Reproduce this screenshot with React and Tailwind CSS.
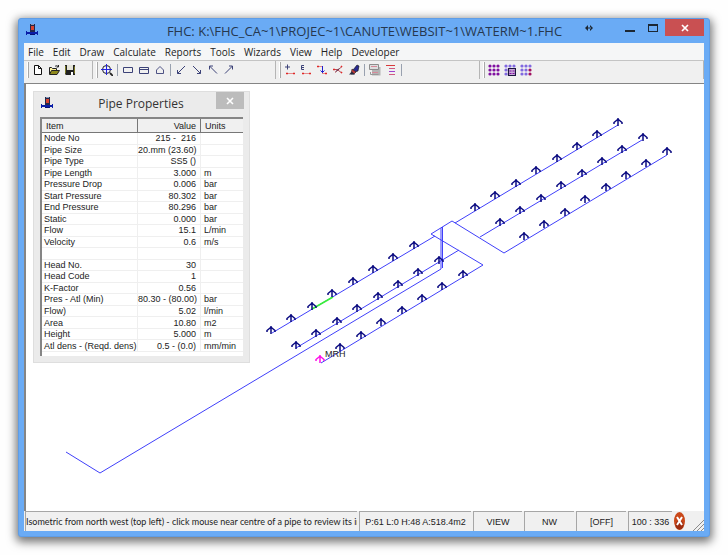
import React from 'react';
import clsx from 'clsx';

const menus = ['File', 'Edit', 'Draw', 'Calculate', 'Reports', 'Tools', 'Wizards', 'View', 'Help', 'Developer'];

const rows = [
  ['Node No', '215 -  216', ''],
  ['Pipe Size', '20.mm (23.60)', ''],
  ['Pipe Type', 'SS5 ()', ''],
  ['Pipe Length', '3.000', 'm'],
  ['Pressure Drop', '0.006', 'bar'],
  ['Start Pressure', '80.302', 'bar'],
  ['End Pressure', '80.296', 'bar'],
  ['Static', '0.000', 'bar'],
  ['Flow', '15.1', 'L/min'],
  ['Velocity', '0.6', 'm/s'],
  ['\u00a0', '', ''],
  ['Head No.', '30', ''],
  ['Head Code', '1', ''],
  ['K-Factor', '0.56', ''],
  ['Pres - Atl (Min)', '80.30 - (80.00)', 'bar'],
  ['Flow)', '5.02', 'l/min'],
  ['Area', '10.80', 'm2'],
  ['Height', '5.000', 'm'],
  ['Atl dens - (Reqd. dens)', '0.5 - (0.0)', 'mm/min'],
];

// Each range pipe: line ends, then the tip of its first (lowest) sprinkler head
const ranges = [
  { from: [272, 333], to: [435, 236], head: [271, 326] },
  { from: [296, 348], to: [459, 250], head: [296, 341] },
  { from: [321, 363], to: [483, 265], head: [320, 355], remote: true },
  { from: [455, 223], to: [618, 125], head: [475, 203] },
  { from: [480, 237], to: [642, 140], head: [500, 218] },
  { from: [504, 253], to: [667, 155], head: [524, 232] },
];

const AppIcon = () => (
  <svg viewBox="0 0 14 14" className="w-[14px] h-[14px] shrink-0" aria-hidden="true">
    <path d="M5 1h5v8H5z" fill="#23284c" />
    <path d="M6 1h3v1H6z" fill="#8a98b8" />
    <path d="M6 3h3v4H6z" fill="#d8432f" />
    <path d="M1 8h1v1h10V8h1v4h-1v-1H2v1H1z" fill="#0a1ea8" />
    <path d="M2 9h10v2H2z" fill="#0a1ea8" />
    <path d="M5 11h5v1H5z" fill="#061070" />
  </svg>
);

const DotGrid = ({ colors, children }) => (
  <svg viewBox="0 0 12 12" className="w-3 h-3">
    {[2, 6, 10].map((x, i) =>
      [2, 6, 10].map((y, j) => (
        <circle key={`${x}-${y}`} cx={x} cy={y} r="1.600" fill={colors(i, j)} />
      ))
    )}
    {children}
  </svg>
);

const icons = {
  New: (
    <svg viewBox="0 0 12 12" className="w-3 h-3">
      <path d="M2.500 1.500h4l3 3v6h-7zM6.500 1.500v3h3" fill="#fff" stroke="#111" />
    </svg>
  ),
  Open: (
    <svg viewBox="0 0 12 12" className="w-3 h-3">
      <path d="M1.500 10V3.500h2l1 1h4V6" fill="#fff3a0" stroke="#222" />
      <path d="M1.500 10.500l2-4h8l-2.500 4z" fill="#8f8a1c" stroke="#222" />
      <path d="M7 2.500c1-1 2-1 3 0M10.500 1v2h-2" fill="none" stroke="#222" />
    </svg>
  ),
  Save: (
    <svg viewBox="0 0 12 12" className="w-3 h-3">
      <path d="M1 1h10v10H2l-1-1z" fill="#222" />
      <path d="M3 1h6v5H3z" fill="#e4e4d8" />
      <path d="M1.500 2v7.500M10.500 2.500v7" stroke="#7c7a25" />
      <path d="M7 8h2v3H7z" fill="#fff" />
    </svg>
  ),
  'Zoom extents': (
    <svg viewBox="0 0 12 12" className="w-3 h-3">
      <circle cx="5.500" cy="5.500" r="4" fill="#eef" stroke="#222" />
      <path d="M5.500 0v11M0 5.500h11" stroke="#2222dd" />
      <path d="M9 9l3 3" stroke="#222" strokeWidth="1.800" />
    </svg>
  ),
  Plan: (
    <svg viewBox="0 0 12 12" className="w-3 h-3">
      <path d="M1.500 3.500h9v5h-9z" fill="none" stroke="#3c4278" />
    </svg>
  ),
  Elevation: (
    <svg viewBox="0 0 12 12" className="w-3 h-3">
      <path d="M1.500 3.500h9v6h-9zM1.500 5.500h9" fill="none" stroke="#3c4278" />
    </svg>
  ),
  'End view': (
    <svg viewBox="0 0 12 12" className="w-3 h-3">
      <path d="M2.500 9.500v-3.500l3.500-3.500 3.500 3.500v3.500z" fill="none" stroke="#3c4278" strokeWidth="0.900" />
    </svg>
  ),
  'South west': (
    <svg viewBox="0 0 12 12" className="w-3 h-3">
      <path d="M10 2L2.500 9.500M2.500 6v3.500H6" fill="none" stroke="#3c4278" />
    </svg>
  ),
  'South east': (
    <svg viewBox="0 0 12 12" className="w-3 h-3">
      <path d="M2 2l7.500 7.500M9.500 6v3.500H6" fill="none" stroke="#3c4278" />
    </svg>
  ),
  'North west': (
    <svg viewBox="0 0 12 12" className="w-3 h-3">
      <path d="M10 9.500L2.500 2M2.500 5.500V2H6" fill="none" stroke="#3c4278" />
    </svg>
  ),
  'North east': (
    <svg viewBox="0 0 12 12" className="w-3 h-3">
      <path d="M2 9.500L9.500 2M9.500 5.500V2H6" fill="none" stroke="#3c4278" />
    </svg>
  ),
  'Add pipe': (
    <svg viewBox="0 0 12 12" className="w-3 h-3">
      <path d="M1 3h5M3.500 0.500v5" stroke="#3c4278" />
      <path d="M2 9.500h9" stroke="#e58a8a" />
      <path d="M2 9.500h2M9 9.500h2" stroke="#e02828" strokeWidth="1.600" />
    </svg>
  ),
  'Edit pipe': (
    <svg viewBox="0 0 12 12" className="w-3 h-3">
      <path d="M4 1.500H1.500v4H4M1.500 3.500h2.500" fill="none" stroke="#3c4278" />
      <path d="M2 9.500h9" stroke="#e58a8a" />
      <path d="M2 9.500h2M9 9.500h2" stroke="#e02828" strokeWidth="1.600" />
    </svg>
  ),
  'Insert drop': (
    <svg viewBox="0 0 12 12" className="w-3 h-3">
      <path d="M1 2.500h6M6 9.500h5" stroke="#e58a8a" />
      <path d="M1 2.500h2M9 9.500h2" stroke="#e02828" strokeWidth="1.600" />
      <path d="M6.500 2v7M4.500 6.500l2 2 2-2" fill="none" stroke="#2020d0" />
    </svg>
  ),
  'Delete pipe': (
    <svg viewBox="0 0 12 12" className="w-3 h-3">
      <path d="M1 5.500h4l5 3.500M3 8.500l7-6" fill="none" stroke="#b85058" />
      <path d="M1 5.500h2M9 3l1-1M9 8l1 1" stroke="#e02828" strokeWidth="1.600" />
      <path d="M4 7.500l3-3" stroke="#402048" />
    </svg>
  ),
  Pen: (
    <svg viewBox="0 0 12 12" className="w-3 h-3">
      <path d="M5 6l4-5 2 1-1 5-3 1z" fill="#2a2a90" stroke="#111" strokeWidth="0.600" />
      <path d="M4 5l4 3-2 2H3z" fill="#c03838" stroke="#222" strokeWidth="0.600" />
      <path d="M1 10.500h6l-3-3z" fill="#2a2a40" />
    </svg>
  ),
  Print: (
    <svg viewBox="0 0 12 12" className="w-3 h-3">
      <path d="M3 3h8.500v8.500H3z" fill="#b4b4b4" />
      <path d="M0.500 0.500h9v5h-9z" fill="#ddd" stroke="#8c8c8c" />
      <path d="M2 2.500h6M3 8.500h6" stroke="#d88a9a" />
      <path d="M1.500 8v2.500h8" fill="none" stroke="#999" />
    </svg>
  ),
  Results: (
    <svg viewBox="0 0 12 12" className="w-3 h-3">
      <path d="M1 1.500h9" stroke="#d83a3a" />
      <path d="M4 4.500h6M4 10.500h6" stroke="#d05a80" />
      <path d="M4 7.500h6" stroke="#a040d0" />
    </svg>
  ),
  'All heads': <DotGrid colors={() => '#8010a0'} />,
  'Heads in box': (
    <DotGrid colors={() => '#8068e0'}>
      <path d="M4.500 4.500h7v7h-7z" fill="#c8a8d8" stroke="#1c1440" strokeWidth="1.200" />
      <path d="M5.500 6.500h2v1h-2zM8.500 6.500h2v1h-2zM5.500 9h2v1h-2zM8.500 9h2v1h-2z" fill="#8010a0" />
    </DotGrid>
  ),
  'Heads in range': <DotGrid colors={(i, j) => (i === 2 && j > 0 ? '#a01060' : '#8068e0')} />,
};

const Tool = ({ name }) => (
  <button type="button" aria-label={name} title={name} className="w-4 h-4 flex items-center justify-center">
    {icons[name]}
  </button>
);

const Divider = () => <span className="w-px h-3 mx-[2px] bg-gray-400" />;

const Band = ({ className, children }) => (
  <div className={clsx('flex items-center border-r border-[#b5b5b5]', className)}>
    <span className="w-[2px] h-4 ml-[3px] mr-px border-l border-white bg-[#a8a8a8]" />
    {children}
  </div>
);

const Head = ({ x, y, color }) => (
  <path
    d={`M${x} ${y}v8M${x - 4} ${y + 6}v-1.500l3-2.500 1-1 1 1 3 2.500v1.500`}
    fill="none"
    stroke={color}
    strokeWidth="1.500"
  />
);

const Drawing = () => (
  <svg viewBox="26 84 678 427" preserveAspectRatio="xMinYMin meet" className="block w-full h-auto" role="img" aria-label="Isometric pipe layout">
    <g fill="none" stroke="#4040fa" strokeWidth="1">
      <path d="M66 452L100 473L441 269V228" />
      <path d="M442.500 268V227" />
      <path d="M483 265L431 234L452 221L504 253" />
      {ranges.map(r => (
        <path key={r.from.join()} d={`M${r.from.join(' ')}L${r.to.join(' ')}`} />
      ))}
      <path d="M312 309L333 297" stroke="#38f038" strokeWidth="1.500" />
    </g>
    {ranges.map(r =>
      [0, 1, 2, 3, 4, 5, 6, 7].map(n => (
        <Head
          key={`${r.head.join()}-${n}`}
          x={Math.round(r.head[0] + n * 20.4)}
          y={Math.round(r.head[1] - n * 12.2)}
          color={r.remote && n === 0 ? '#ff10e8' : '#0a0a80'}
        />
      ))
    )}
    <text x="325" y="357" fontSize="9" fill="#222" className="font-['Liberation_Sans',sans-serif]">MRH</text>
  </svg>
);

const PipeProperties = () => (
  <section className="absolute left-[7px] top-[7px] w-[217px] px-[6px] pb-[6px] bg-[#ebebeb] border border-[#dedede]">
    <header className="flex items-start h-[25px] -mr-px">
      <div className="pt-1"><AppIcon /></div>
      <h2 className="flex-1 pt-1 pl-3 text-center text-[12px] leading-4 text-[#333] font-['Open_Sans',sans-serif]">Pipe Properties</h2>
      <button type="button" aria-label="Close properties" className="w-7 h-[17px] flex items-center justify-center bg-[#bcbcbc] text-white">
        <svg viewBox="0 0 8 8" className="w-2 h-2"><path d="M1 1l6 6M7 1L1 7" stroke="currentColor" strokeWidth="1.600" /></svg>
      </button>
    </header>
    <div className="h-[239px] bg-white border-l-2 border-t-2 border-[#858585]">
      <table className="w-full h-[233px] table-fixed border-separate border-spacing-0 text-[9px] leading-[10px] text-[#222] whitespace-nowrap">
        <colgroup>
          <col className="w-24" />
          <col className="w-[63px]" />
          <col />
        </colgroup>
        <thead>
          <tr className="bg-[#f0f0f0] text-left">
            <th className="h-[14px] font-normal pl-1 p-0 border-r border-b border-[#777]">Item</th>
            <th className="h-[14px] font-normal text-right p-0 pr-1 border-r border-b border-[#777]">Value</th>
            <th className="h-[14px] font-normal p-0 pl-1 border-b border-[#777]">Units</th>
          </tr>
        </thead>
        <tbody>
          {rows.map(([item, value, unit], i) => (
            <tr key={i}>
              <td className="p-0 pl-[2px] border-r border-b border-[#efefef]">{item}</td>
              <td className="p-0 pr-1 text-right whitespace-pre border-r border-b border-[#efefef]">{value}</td>
              <td className="p-0 pl-[3px] border-b border-[#efefef]">{unit}</td>
            </tr>
          ))}
        </tbody>
      </table>
    </div>
  </section>
);

const Panel = ({ className, children }) => (
  <div className={clsx('flex items-center border-l border-t border-[#a6a6a6] overflow-hidden whitespace-nowrap', className)}>
    {children}
  </div>
);

const App = () => (
  <div className="min-h-screen flex p-[18px] bg-[#fefefe] font-['Liberation_Sans',sans-serif]">
    <div className="flex-1 min-w-0 flex flex-col px-[5px] pb-[5px] rounded-[3px] bg-[#6aabf5] border border-[#5f9de6] shadow-[0_3px_10px_2px_rgba(0,0,0,0.55)]">
      <header className="flex items-start h-6 text-[#26384f]">
        <div className="flex-1 pt-1 pl-px"><AppIcon /></div>
        <h1 className="pt-[2px] text-[13px] leading-5 whitespace-nowrap font-['Open_Sans',sans-serif]">
          FHC: K:\FHC_CA~1\PROJEC~1\CANUTE\WEBSIT~1\WATERM~1.FHC
        </h1>
        <div className="flex-1 flex justify-end h-[17px] text-[#1c2733]">
          <button type="button" aria-label="Move" className="w-6 flex items-center justify-center">
            <svg viewBox="0 0 8 6" className="w-2 h-[6px]"><path d="M0 3l3-3v6zM8 3L5 0v6zM2 2.500h4v1H2z" fill="currentColor" /></svg>
          </button>
          <span className="w-4" />
          <button type="button" aria-label="Minimize" className="w-[26px] flex items-center justify-center">
            <svg viewBox="0 0 10 8" className="w-[10px] h-2"><path d="M0 6h10v2H0z" fill="currentColor" /></svg>
          </button>
          <button type="button" aria-label="Maximize" className="w-5 flex items-center justify-center">
            <svg viewBox="0 0 10 8" className="w-[10px] h-2"><path d="M0 0h10v8H0zM1 2v5h8V2z" fill="currentColor" fillRule="evenodd" /></svg>
          </button>
          <button type="button" aria-label="Close" className="w-[39px] ml-[2px] flex items-center justify-center bg-[#c95052] text-white">
            <svg viewBox="0 0 8 8" className="w-2 h-2"><path d="M1 1l6 6M7 1L1 7" stroke="currentColor" strokeWidth="1.700" /></svg>
          </button>
        </div>
      </header>

      <nav className="flex items-center gap-[9px] h-[17px] pl-1 bg-[#f5f6f7] text-[10px] leading-4 text-[#222] font-['Open_Sans',sans-serif]">
        {menus.map(m => (
          <button key={m} type="button">{m}</button>
        ))}
      </nav>

      <div className="flex h-[23px] pb-[4px] bg-[#f0f0f0] border-t border-[#c4c4c4]">
        <Band className="w-[69px]">
          <Tool name="New" />
          <Tool name="Open" />
          <Tool name="Save" />
        </Band>
        <Band className="w-[183px]">
          <Tool name="Zoom extents" />
          <Divider />
          <Tool name="Plan" />
          <Tool name="Elevation" />
          <Tool name="End view" />
          <Divider />
          <Tool name="South west" />
          <Tool name="South east" />
          <Tool name="North west" />
          <Tool name="North east" />
        </Band>
        <Band className="w-[204px]">
          <Tool name="Add pipe" />
          <Tool name="Edit pipe" />
          <Tool name="Insert drop" />
          <Tool name="Delete pipe" />
          <Tool name="Pen" />
          <Divider />
          <Tool name="Print" />
          <Tool name="Results" />
          <Divider />
        </Band>
        <Band className="flex-1">
          <Tool name="All heads" />
          <Tool name="Heads in box" />
          <Tool name="Heads in range" />
        </Band>
      </div>

      <main className="relative flex-1 bg-white border-t border-l-2 border-[#858585]">
        <Drawing />
        <PipeProperties />
      </main>

      <footer className="flex gap-[2px] h-5 pl-px bg-[#f0f0f0] text-[9px] leading-3 text-[#222]">
        <Panel className="flex-1 font-['Lato',sans-serif]">Isometric from north west (top left) - click mouse near centre of a pipe to review its inf</Panel>
        <Panel className="w-[112px] justify-center">P:61 L:0 H:48 A:518.4m2</Panel>
        <Panel className="w-[49px] justify-center">VIEW</Panel>
        <Panel className="w-[50px] justify-center">NW</Panel>
        <Panel className="w-[50px] justify-center">[OFF]</Panel>
        <Panel className="w-11 justify-center">100 : 336</Panel>
        <button type="button" aria-label="Stop" className="w-[11px] flex items-center">
          <svg viewBox="0 0 11 18" className="w-[11px] h-[18px]">
            <ellipse cx="5.500" cy="9" rx="5.500" ry="9" fill="#c9481a" />
            <ellipse cx="5.500" cy="13" rx="4" ry="4.500" fill="#9c2c10" />
            <path d="M3 5l5 8M8 5l-5 8" stroke="#fff" strokeWidth="2" />
          </svg>
        </button>
        <svg viewBox="0 0 12 12" className="w-3 h-3 ml-[5px] self-end" aria-hidden="true">
          <path d="M1 12L12 1M5 12l7-7M9 12l3-3" stroke="#8a8a8a" />
        </svg>
      </footer>
    </div>
  </div>
);

export default App;
